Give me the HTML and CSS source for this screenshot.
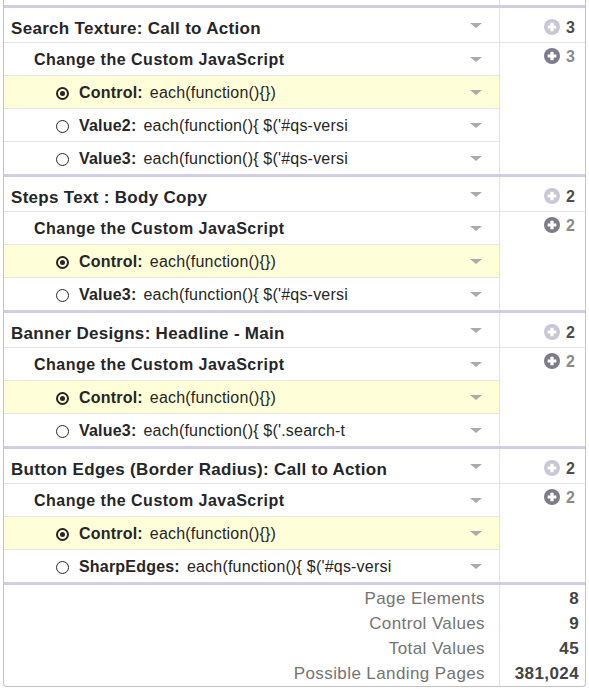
FILE: index.html
```html
<!DOCTYPE html>
<html lang="en">
<head>
  <meta charset="UTF-8" />
  <title>Test Matrix</title>
  <link rel="stylesheet" href="styles.css">
</head>
<body>
  <div class="matrix">
    <div class="lead"><div></div><div class="side"></div></div>

    <!-- Search Texture -->
    <section class="group">
      <div class="element"><span class="title">Search Texture: Call to Action</span><span class="caret"></span></div>
      <div class="count count-element">
        <svg class="plus" viewBox="0 0 14 14"><circle cx="7" cy="7" r="7" /><path d="M7 3.2v7.6M3.2 7h7.6" /></svg>
        <b>3</b>
      </div>
      <div class="values">
        <div class="row sub"><span>Change the Custom JavaScript</span><span class="caret"></span></div>
        <div class="row option active"><span class="radio on"></span><b>Control:</b><span class="code">each(function(){})</span><span class="caret"></span></div>
        <div class="row option"><span class="radio"></span><b>Value2:</b><span class="code">each(function(){ $('#qs-versi</span><span class="caret"></span></div>
        <div class="row option"><span class="radio"></span><b>Value3:</b><span class="code">each(function(){ $('#qs-versi</span><span class="caret"></span></div>
      </div>
      <div class="count count-values">
        <svg class="plus" viewBox="0 0 14 14"><circle cx="7" cy="7" r="7" /><path d="M7 3.2v7.6M3.2 7h7.6" /></svg>
        <b>3</b>
      </div>
    </section>

    <!-- Steps Text -->
    <section class="group">
      <div class="element"><span class="title">Steps Text : Body Copy</span><span class="caret"></span></div>
      <div class="count count-element">
        <svg class="plus" viewBox="0 0 14 14"><circle cx="7" cy="7" r="7" /><path d="M7 3.2v7.6M3.2 7h7.6" /></svg>
        <b>2</b>
      </div>
      <div class="values">
        <div class="row sub"><span>Change the Custom JavaScript</span><span class="caret"></span></div>
        <div class="row option active"><span class="radio on"></span><b>Control:</b><span class="code">each(function(){})</span><span class="caret"></span></div>
        <div class="row option"><span class="radio"></span><b>Value3:</b><span class="code">each(function(){ $('#qs-versi</span><span class="caret"></span></div>
      </div>
      <div class="count count-values">
        <svg class="plus" viewBox="0 0 14 14"><circle cx="7" cy="7" r="7" /><path d="M7 3.2v7.6M3.2 7h7.6" /></svg>
        <b>2</b>
      </div>
    </section>

    <!-- Banner Designs -->
    <section class="group">
      <div class="element"><span class="title">Banner Designs: Headline - Main</span><span class="caret"></span></div>
      <div class="count count-element">
        <svg class="plus" viewBox="0 0 14 14"><circle cx="7" cy="7" r="7" /><path d="M7 3.2v7.6M3.2 7h7.6" /></svg>
        <b>2</b>
      </div>
      <div class="values">
        <div class="row sub"><span>Change the Custom JavaScript</span><span class="caret"></span></div>
        <div class="row option active"><span class="radio on"></span><b>Control:</b><span class="code">each(function(){})</span><span class="caret"></span></div>
        <div class="row option"><span class="radio"></span><b>Value3:</b><span class="code">each(function(){ $('.search-t</span><span class="caret"></span></div>
      </div>
      <div class="count count-values">
        <svg class="plus" viewBox="0 0 14 14"><circle cx="7" cy="7" r="7" /><path d="M7 3.2v7.6M3.2 7h7.6" /></svg>
        <b>2</b>
      </div>
    </section>

    <!-- Button Edges -->
    <section class="group">
      <div class="element"><span class="title">Button Edges (Border Radius): Call to Action</span><span class="caret"></span></div>
      <div class="count count-element">
        <svg class="plus" viewBox="0 0 14 14"><circle cx="7" cy="7" r="7" /><path d="M7 3.2v7.6M3.2 7h7.6" /></svg>
        <b>2</b>
      </div>
      <div class="values">
        <div class="row sub"><span>Change the Custom JavaScript</span><span class="caret"></span></div>
        <div class="row option active"><span class="radio on"></span><b>Control:</b><span class="code">each(function(){})</span><span class="caret"></span></div>
        <div class="row option"><span class="radio"></span><b>SharpEdges:</b><span class="code">each(function(){ $('#qs-versi</span><span class="caret"></span></div>
      </div>
      <div class="count count-values">
        <svg class="plus" viewBox="0 0 14 14"><circle cx="7" cy="7" r="7" /><path d="M7 3.2v7.6M3.2 7h7.6" /></svg>
        <b>2</b>
      </div>
    </section>

    <!-- Totals -->
    <section class="totals">
      <div class="labels">
        <div>Page Elements</div>
        <div>Control Values</div>
        <div>Total Values</div>
        <div>Possible Landing Pages</div>
      </div>
      <div class="nums">
        <div>8</div>
        <div>9</div>
        <div>45</div>
        <div>381,024</div>
      </div>
    </section>
  </div>
</body>
</html>
```

FILE: styles.css
```css
/* Reset and base */
* {
  box-sizing: border-box;
  margin: 0;
  padding: 0;
}
body {
  font-family: 'Liberation Sans', Arial, Helvetica, sans-serif;
  background: #fff;
  color: #262626;
  -webkit-font-smoothing: antialiased;
}

.matrix {
  width: 583px;
  margin-left: 3px;
  border-left: 1px solid #c2c2c2;
  border-right: 1px solid #c2c2c2;
  border-bottom: 1px solid #c2c2c2;
  border-radius: 0 0 4px 4px;
}

/* strip above the first group (table continues above) */
.lead {
  display: grid;
  grid-template-columns: 1fr 86px;
  height: 5px;
}
.lead .side {
  border-left: 1px solid #e2e2e2;
}

/* Element groups */
.group {
  display: grid;
  grid-template-columns: 1fr 86px;
  border-top: 3px solid #d0cee0;
}

.element {
  height: 35px;
  border-bottom: 1px solid #e6e6e6;
  display: flex;
  align-items: flex-start;
  padding: 11px 0 0 7px;
}
.element .title {
  font-size: 17px;
  line-height: 20px;
  font-weight: 700;
  letter-spacing: 0.3px;
  white-space: nowrap;
}
.element .caret {
  align-self: center;
  margin-top: -11px;
}

.caret {
  width: 0;
  height: 0;
  border-left: 6px solid transparent;
  border-right: 6px solid transparent;
  border-top: 5px solid #ababab;
  margin-left: auto;
  margin-right: 17px;
  flex-shrink: 0;
}

.row {
  height: 33px;
  border-bottom: 1px solid #e6e6e6;
  display: flex;
  align-items: center;
  white-space: nowrap;
  padding-top: 2px;
}
.row:last-child {
  height: 32px;
  border-bottom: none;
}
.row .caret {
  margin-top: -2px;
}

.sub {
  padding-left: 30px;
  font-size: 16px;
  font-weight: 700;
  letter-spacing: 0.5px;
}

.option {
  padding-left: 52px;
  font-size: 16px;
  letter-spacing: 0.2px;
}
.option.active {
  background: #fefed8;
}
.option b {
  font-weight: 700;
  margin-right: 7px;
}

.radio {
  width: 13px;
  height: 13px;
  border: 1.5px solid #262626;
  border-radius: 50%;
  margin-right: 10px;
  display: flex;
  align-items: center;
  justify-content: center;
  flex-shrink: 0;
}
.radio.on {
  border-width: 2.2px;
}
.radio.on::after {
  content: '';
  width: 5px;
  height: 5px;
  border-radius: 50%;
  background: #262626;
}

/* Counts column */
.count {
  border-left: 1px solid #e2e2e2;
  display: flex;
  align-items: center;
  justify-content: flex-end;
  gap: 6px;
  padding-right: 10px;
  font-size: 16px;
  font-weight: 700;
}
.count b {
  line-height: 16px;
}
.count-element {
  height: 35px;
  border-bottom: 1px solid #e6e6e6;
  align-items: flex-start;
  padding-top: 12px;
  color: #4c4c4c;
}
.count-element .plus circle {
  fill: #c9c7d5;
}
.count-values {
  align-items: flex-start;
  padding-top: 6px;
  color: #8a8a8a;
}
.count-values .plus circle {
  fill: #7d7b89;
}
.plus {
  width: 16px;
  height: 16px;
  display: block;
  margin-top: -1px;
}
.plus path {
  stroke: #fff;
  stroke-width: 2.8;
}

/* Totals */
.totals {
  display: grid;
  grid-template-columns: 1fr 86px;
  border-top: 3px solid #d0cee0;
}
.labels,
.nums {
  padding-top: 1px;
  font-size: 17px;
  letter-spacing: 0.4px;
}
.labels div,
.nums div {
  height: 25px;
  line-height: 25px;
  text-align: right;
}
.labels {
  color: #747474;
  padding-right: 14px;
}
.nums {
  border-left: 1px solid #e2e2e2;
  color: #444;
  font-weight: 700;
  padding-right: 6px;
}
```
